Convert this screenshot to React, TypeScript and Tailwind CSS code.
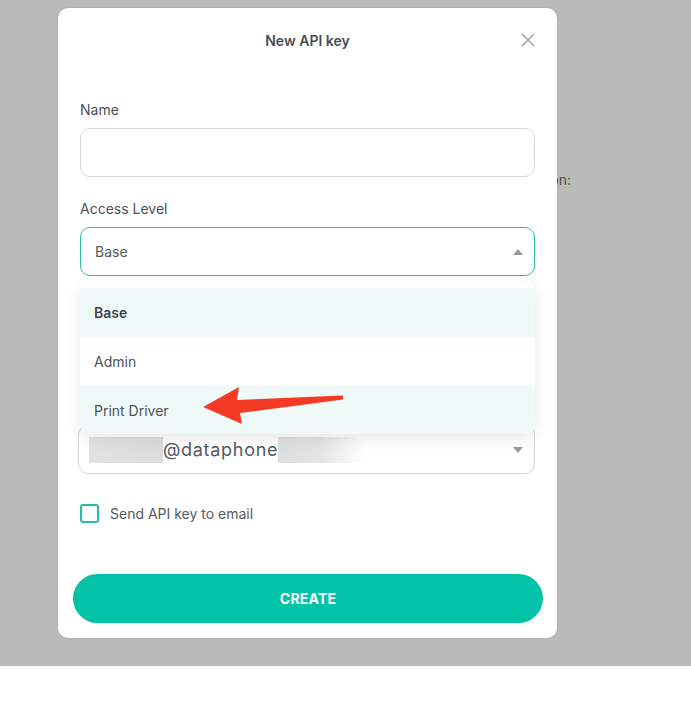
import React from "react";

const font = { fontFamily: "Inter, 'Noto Sans', sans-serif" };

function Triangle({ up }: { up?: boolean }) {
  return (
    <svg width="10" height="6" viewBox="0 0 10 6" className="block">
      {up ? <path d="M0 6 L5 0 L10 6 Z" fill="#9a9a9a" /> : <path d="M0 0 L5 6 L10 0 Z" fill="#9a9a9a" />}
    </svg>
  );
}

export default function App() {
  return (
    <div style={font} className="w-[691px] min-h-[712px] bg-white">
      <div className="relative h-[666px] bg-[#bababa] overflow-hidden">
        {/* underlying page text */}
        <div className="w-[571px] pt-[170px] flex justify-end">
          <span className="text-[14px] leading-[20px] text-[#505050]">Fill in the following information:</span>
        </div>

        {/* modal */}
        <div className="absolute left-[58px] top-[8px] w-[499px] h-[630px] bg-white rounded-[10px] shadow-[0_0_2px_rgba(0,0,0,0.15)] px-[22px]">
          <div className="relative h-[64px] flex items-center justify-center">
            <span className="text-[14px] font-semibold text-[#484e54] mt-[1px]">New API key</span>
            <svg className="absolute right-[0px] top-[25px]" width="14" height="14" viewBox="0 0 14 14">
              <path d="M1 1 L13 13 M13 1 L1 13" stroke="#9b9b9b" strokeWidth="1.4" />
            </svg>
          </div>

          <div className="relative pt-[28px]">
            <div className="text-[14px] leading-[20px] text-[#4a4f55]">Name</div>
            <div className="mt-[8px] h-[49px] rounded-[10px] border border-[#d6d6d6]" />

            <div className="mt-[22px] text-[14px] leading-[20px] text-[#4a4f55]">Access Level</div>
            <div className="mt-[8px] h-[49px] rounded-[10px] border border-[#22bfa6] flex items-center justify-between pl-[14px] pr-[11px]">
              <span className="text-[14px] text-[#52575d]">Base</span>
              <Triangle up />
            </div>

            {/* field hidden under the open menu */}
            <div className="mt-[22px] h-[20px]" />
            <div className="mt-[8px] h-[49px] rounded-[10px] border border-[#d6d6d6]" />

            <div className="mt-[22px] h-[20px]" />
            <div className="mt-[8px] -ml-[2px] h-[49px] rounded-[10px] border border-[#d6d6d6] flex items-center justify-between pl-[10px] pr-[11px]">
              <div className="flex items-center">
                <div className="w-[74px] h-[26px] bg-gradient-to-r from-[#e2e2e2] to-[#dcdcdc]" />
                <span className="text-[18px] tracking-[0.7px] text-[#555a5f]">@dataphone</span>
                <div className="w-[86px] h-[26px] bg-gradient-to-r from-[#dedede] via-[#e4e4e4] to-white" />
              </div>
              <Triangle />
            </div>

            <div className="mt-[29px] flex items-center gap-[11px]">
              <div className="w-[19px] h-[19px] rounded-[3px] border-2 border-[#22bfa6]" />
              <span className="text-[14px] text-[#555a60]">Send API key to email</span>
            </div>

            <button className="mt-[50px] -mx-[7px] w-[470px] h-[49px] rounded-full bg-[#02c3a7] text-white text-[14px] font-bold tracking-[0.2px]">
              CREATE
            </button>

            {/* dropdown menu */}
            <div className="absolute left-0 right-0 top-[209px] pt-[7px] bg-white rounded-[10px] shadow-[0_4px_16px_rgba(0,0,0,0.10)] overflow-hidden">
              <div className="h-[49px] flex items-center px-[14px] bg-[#effaf8] text-[14px] font-semibold text-[#3f454b]">Base</div>
              <div className="h-[49px] flex items-center px-[14px] bg-white text-[14px] text-[#4d5359]">Admin</div>
              <div className="h-[48px] flex items-center px-[14px] bg-[#effaf8] text-[14px] text-[#4d5359]">Print Driver</div>
            </div>
          </div>
        </div>

        {/* red annotation arrow */}
        <svg className="absolute left-0 top-0" width="691" height="666" viewBox="0 0 691 666">
          <path d="M203 407 L239 387 L237 400 L343 395.5 L343 399.5 L240 413 L242 424 Z" fill="#f43a24" />
        </svg>
      </div>
    </div>
  );
}
